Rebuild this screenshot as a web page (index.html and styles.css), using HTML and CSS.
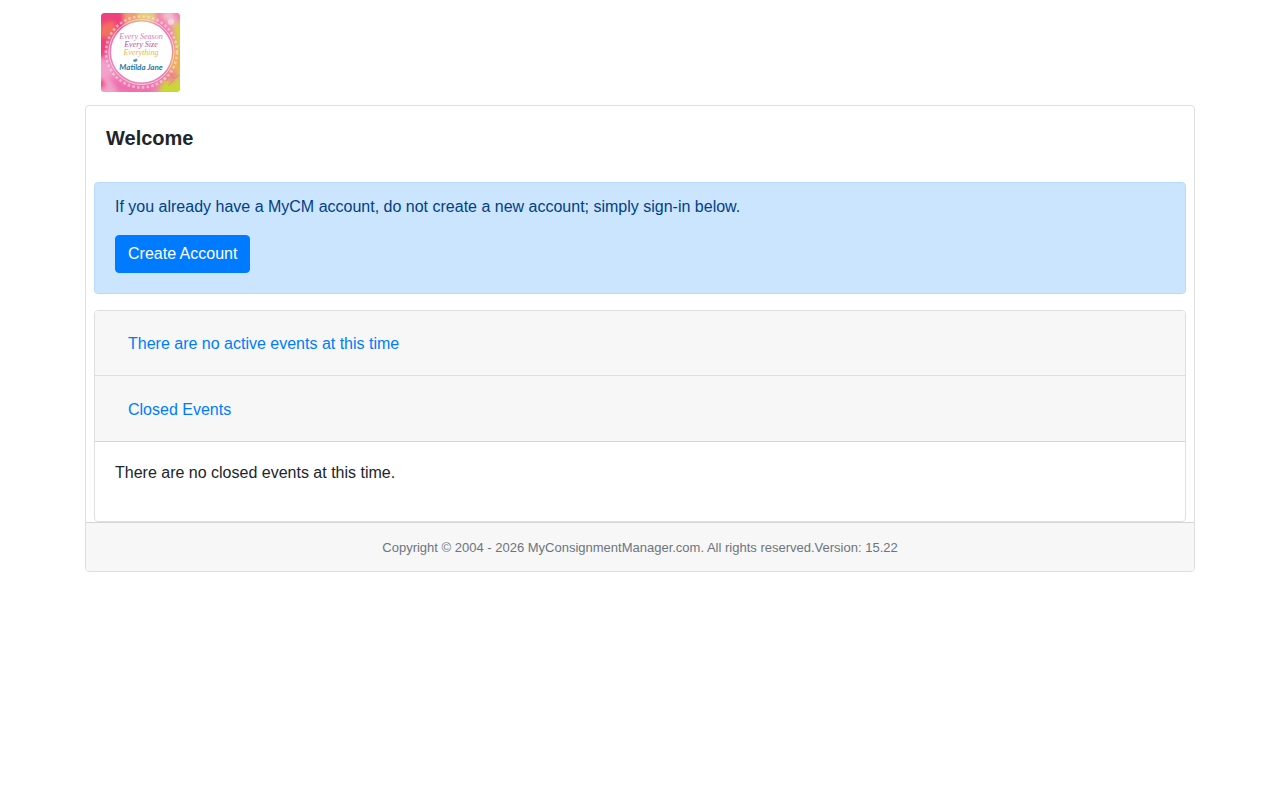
FILE: index.html
```html
<!DOCTYPE html>
<html lang="en">
<head>
<meta charset="utf-8">
<meta name="viewport" content="width=device-width, initial-scale=1">
<title>MyConsignmentManager</title>
<link rel="stylesheet" href="styles.css">
</head>
<body>
<div class="container">
  <header class="navbar">
    <a class="brand" href="#" aria-label="Home">
      <svg class="logo" viewBox="0 0 79 79" aria-hidden="true">
        <defs>
          <filter id="wash" x="-20%" y="-20%" width="140%" height="140%"><feGaussianBlur stdDeviation="2"/></filter>
          <clipPath id="frame"><rect width="79" height="79" rx="4"/></clipPath>
        </defs>
        <g clip-path="url(#frame)">
          <rect width="79" height="79" fill="#f07db5"/>
          <g filter="url(#wash)">
            <path d="M-4-4H34L22 14 10 25 4 42-4 48Z" fill="#ee3f7c"/>
            <path d="M0 12L12 8 16 17 7 25-3 23Z" fill="#f4705c"/>
            <path d="M22-3H53L44 10 24 12Z" fill="#f0a070"/>
            <path d="M36-4H60L54 10 38 7Z" fill="#e6cd78"/>
            <path d="M53-4H83V17L68 19 56 10Z" fill="#f286ae"/>
            <path d="M60 1L69-3 76 8 70 13Z" fill="#f3bfd0"/>
            <path d="M72 12L83 7V45L75 42Z" fill="#d8cf49"/>
            <path d="M73 35L83 38V60L68 57Z" fill="#efb055"/>
            <path d="M83 54V83H55L61 70 69 63Z" fill="#c9d832"/>
            <path d="M63 62L75 56 79 64 69 72Z" fill="#ef8d86"/>
            <path d="M-4 44L9 50 15 66 31 76 25 83H-4Z" fill="#f3a0cb"/>
            <path d="M7 62L22 70 42 73 54 70 48 81H18Z" fill="#ef6fae"/>
            <path d="M-3 65L3 67 5 74-3 76Z" fill="#ed4b7a"/>
          </g>
          <circle cx="70" cy="9" r="3" fill="#f8dce5" opacity=".7"/>
          <path d="M65 68l5-8 3 6 5-4M67 73l6-6" fill="none" stroke="#df5d6c" opacity=".35"/>
          <circle cx="40.500" cy="39" r="35.500" fill="none" stroke="#fbe3e8" stroke-width="2.600" stroke-dasharray="2.600 2.200" opacity=".6"/>
          <circle cx="40.500" cy="39" r="32.500" fill="none" stroke="#fce5ec" stroke-width="1" opacity=".8"/>
          <circle cx="40.500" cy="39" r="30.500" fill="#fffefe"/>
          <g class="script" text-anchor="middle">
            <text x="40" y="26" fill="#d683b4">Every Season</text>
            <text x="40" y="34" fill="#bd5096">Every Size</text>
            <text x="40" y="42" fill="#e6b65f">Everything</text>
          </g>
          <text class="name" x="40" y="57" text-anchor="middle" fill="#287ca8">Matilda Jane</text>
          <path d="M32 48l1-2 1 1 1-2 1 2 1-1-1 2-2 1Z" fill="#3c8eb2"/>
        </g>
      </svg>
    </a>
  </header>

  <main class="card">
    <h1 class="title">Welcome</h1>
    <div class="content">
      <section class="alert">
        <p class="text">If you already have a MyCM account, do not create a new account; simply sign-in below.</p>
        <button class="btn btn-primary" type="button">Create Account</button>
      </section>
      <section class="accordion">
        <h2 class="item-header"><button class="btn btn-link" type="button">There are no active events at this time</button></h2>
        <h2 class="item-header"><button class="btn btn-link" type="button" aria-expanded="true" aria-controls="closed">Closed Events</button></h2>
        <div class="item-body" id="closed"><p class="text">There are no closed events at this time.</p></div>
      </section>
    </div>
    <footer class="footer">Copyright © 2004 - 2026 MyConsignmentManager.com. All rights reserved.Version: 15.22</footer>
  </main>
</div>
</body>
</html>
```

FILE: styles.css
```css
*, *::before, *::after {
  box-sizing: border-box;
}

body {
  margin: 0;
  background: #fff;
  color: #212529;
  font: 16px/24px "Liberation Sans", Arial, sans-serif;
}

.container {
  max-width: 1140px;
  margin: 0 auto;
  padding: 0 15px;
}

.navbar {
  display: flex;
  padding: 13px 16px;
}

.brand,
.logo {
  display: block;
}

.logo {
  width: 79px;
  height: 79px;
}

.script {
  font: italic 8px "Liberation Serif", serif;
}

.name {
  font: italic bold 8px Lato, sans-serif;
}

.card {
  border: 1px solid #dfdfdf;
  border-radius: 4px;
  overflow: hidden;
}

.title {
  margin: 0;
  padding: 20px 20px 32px;
  font-size: 20px;
  line-height: 24px;
}

.content {
  padding: 0 8px;
}

.text {
  margin: 0 0 16px;
}

.alert {
  margin-bottom: 16px;
  padding: 12px 20px 20px;
  border: 1px solid #b8daff;
  border-radius: 4px;
  background: #cce5ff;
  color: #004085;
}

.btn {
  display: block;
  padding: 6px 12px;
  border: 1px solid transparent;
  border-radius: 4px;
  font: inherit;
  cursor: pointer;
}

.btn-primary {
  border-color: #007bff;
  background: #007bff;
  color: #fff;
}

.btn-link {
  background: transparent;
  color: #007bff;
}

.accordion {
  border: 1px solid #dfdfdf;
  border-radius: 4px;
  overflow: hidden;
}

.item-header {
  margin: 0;
  padding: 14px 20px 12px;
  border-bottom: 1px solid #dfdfdf;
  background: #f7f7f7;
  font-size: 16px;
  font-weight: normal;
}

.item-header + .item-header {
  padding-top: 15px;
  border-bottom-color: #d6d6d6;
}

.item-body {
  padding: 19px 20px 20px;
}

.footer {
  padding: 13px 20px 11px;
  border-top: 1px solid #d6d6d6;
  background: #f7f7f7;
  color: #6c757d;
  font-size: 13px;
  text-align: center;
}
```
